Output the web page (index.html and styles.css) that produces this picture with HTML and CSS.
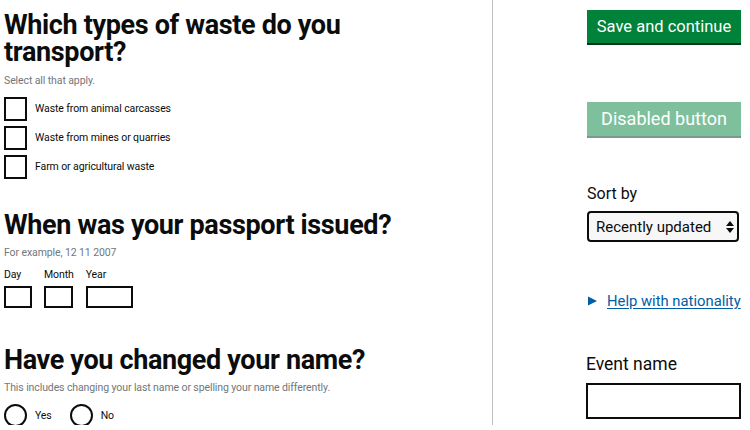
FILE: index.html
```html
<!DOCTYPE html>
<html lang="en">
<head>
<meta charset="utf-8">
<title>Form components</title>
<link rel="stylesheet" href="styles.css">
</head>
<body>
<div class="page">
  <main class="main">
    <section class="question">
      <h1 class="heading">Which types of waste do you transport?</h1>
      <p class="hint hint-first">Select all that apply.</p>
      <div class="checkboxes">
        <label class="check"><span class="box"></span><span class="check-label">Waste from animal carcasses</span></label>
        <label class="check"><span class="box"></span><span class="check-label">Waste from mines or quarries</span></label>
        <label class="check"><span class="box"></span><span class="check-label">Farm or agricultural waste</span></label>
      </div>
    </section>

    <section class="question q-date">
      <h2 class="heading">When was your passport issued?</h2>
      <p class="hint hint-date">For example, 12 11 2007</p>
      <div class="date">
        <div class="date-item"><span class="small-label">Day</span><span class="date-box day"></span></div>
        <div class="date-item"><span class="small-label">Month</span><span class="date-box month"></span></div>
        <div class="date-item"><span class="small-label">Year</span><span class="date-box year"></span></div>
      </div>
    </section>

    <section class="question q-name">
      <h2 class="heading">Have you changed your name?</h2>
      <p class="hint hint-name">This includes changing your last name or spelling your name differently.</p>
      <div class="radios">
        <label class="radio"><span class="circle"></span><span class="radio-label">Yes</span></label>
        <label class="radio"><span class="circle"></span><span class="radio-label">No</span></label>
      </div>
    </section>
  </main>

  <aside class="side">
    <div class="button">Save and continue</div>
    <div class="button button-disabled">Disabled button</div>

    <div class="field-label sort-label">Sort by</div>
    <div class="select">
      <span>Recently updated</span>
      <svg class="select-arrows" width="8" height="12" viewBox="0 0 8 12" aria-hidden="true">
        <path d="M4 0 L8 5 L0 5 Z" fill="#0b0c0c"/>
        <path d="M0 7 L8 7 L4 12 Z" fill="#0b0c0c"/>
      </svg>
    </div>

    <div class="details">
      <svg class="details-arrow" width="10" height="10" viewBox="0 0 10 10" aria-hidden="true">
        <path d="M0 0.5 L9 5 L0 9.5 Z" fill="#005ea5"/>
      </svg>
      <a class="details-link" href="#">Help with nationality</a>
    </div>

    <div class="field-label event-label">Event name</div>
    <div class="text-input"></div>
  </aside>
</div>
</body>
</html>
```

FILE: styles.css
```css
html, body {
  margin: 0;
  padding: 0;
  background: #ffffff;
}

body {
  font-family: Roboto, "Liberation Sans", Arial, sans-serif;
  color: #0b0c0c;
}

.page {
  display: flex;
  align-items: flex-start;
}

.main {
  box-sizing: border-box;
  width: 493px;
  height: 425px;
  padding: 12px 0 0 4px;
  border-right: 1px solid #bfc1c3;
}

.heading {
  margin: 0;
  max-width: 400px;
  font-size: 27px;
  line-height: 27px;
  font-weight: 700;
  letter-spacing: -0.35px;
}

.hint {
  margin: 0;
  font-size: 10.5px;
  line-height: 14px;
  letter-spacing: -0.1px;
  color: #6f777b;
}

.hint-first { margin-top: 8px; }

.checkboxes {
  display: flex;
  flex-direction: column;
  gap: 5px;
  margin-top: 9px;
}

.check {
  display: flex;
  align-items: center;
  gap: 8px;
}

.box {
  box-sizing: border-box;
  width: 23px;
  height: 24px;
  border: 2px solid #0b0c0c;
  background: #fff;
}

.check-label,
.radio-label,
.small-label {
  font-size: 10.5px;
  line-height: 14px;
  letter-spacing: -0.1px;
}

.q-date { margin-top: 33px; }

.hint-date { margin-top: 7px; }

.date {
  display: flex;
  gap: 12px;
  margin-top: 8px;
}

.date-item {
  display: flex;
  flex-direction: column;
  gap: 4px;
}

.date-box {
  box-sizing: border-box;
  height: 22px;
  border: 2px solid #0b0c0c;
}

.day { width: 28px; }
.month { width: 29px; }
.year { width: 47px; }

.q-name { margin-top: 39px; }

.hint-name { margin-top: 7px; }

.radios {
  display: flex;
  gap: 18px;
  margin-top: 9px;
}

.radio {
  display: flex;
  align-items: center;
  gap: 8px;
}

.circle {
  box-sizing: border-box;
  width: 23px;
  height: 23px;
  border: 2px solid #0b0c0c;
  border-radius: 50%;
}

.side {
  box-sizing: border-box;
  width: 155px;
  margin-left: 93px;
  padding-top: 10px;
}

.button {
  margin-left: 1px;
  background: #00823b;
  color: #ffffff;
  text-align: center;
  font-size: 16.5px;
  line-height: 20px;
  padding: 7px 0 6px;
  box-shadow: 0 2px 0 #003618;
}

.button-disabled {
  margin-top: 59px;
  font-size: 18px;
  line-height: 22px;
  padding: 6px 0 6px;
  opacity: 0.5;
}

.field-label {
  font-size: 16px;
  line-height: 20px;
}

.sort-label {
  margin-top: 48px;
  margin-left: 1px;
}

.select {
  box-sizing: border-box;
  margin-top: 7px;
  margin-left: 1px;
  width: 152px;
  height: 31px;
  display: flex;
  align-items: center;
  justify-content: space-between;
  padding: 0 3px 0 7px;
  border: 2px solid #0b0c0c;
  border-radius: 4px;
  background: #f7f7f7;
  font-size: 15px;
}

.select-arrows {
  flex-shrink: 0;
}

.details {
  display: flex;
  align-items: center;
  gap: 9px;
  margin-top: 49px;
  margin-left: 2px;
  font-size: 14.8px;
  line-height: 20px;
  white-space: nowrap;
}

.details-arrow {
  flex-shrink: 0;
}

.details-link {
  color: #005ea5;
  text-decoration: underline;
  text-underline-offset: 2px;
}

.event-label {
  margin-top: 42px;
  font-size: 17.5px;
  line-height: 22px;
}

.text-input {
  box-sizing: border-box;
  margin-top: 8px;
  height: 36px;
  border: 2px solid #0b0c0c;
}
```
